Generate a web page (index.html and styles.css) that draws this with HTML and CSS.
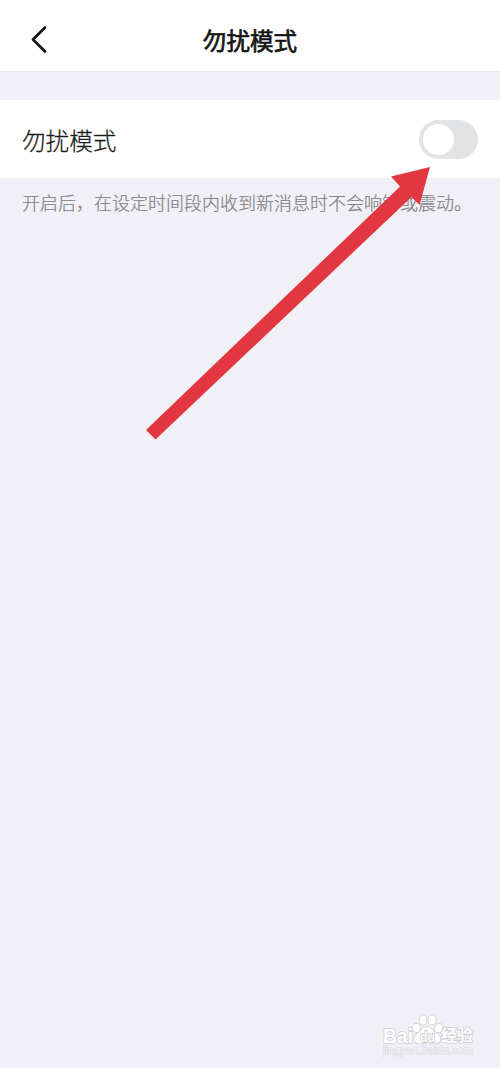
FILE: index.html
```html
<!DOCTYPE html>
<html lang="zh-CN">
<head>
<meta charset="utf-8">
<title>勿扰模式</title>
<link rel="stylesheet" href="styles.css">
</head>
<body>
<div class="screen">
  <header class="navbar">
    <svg class="back" viewBox="0 0 20 30" aria-label="返回"><path d="M15 3.5 L3 15.5 L15 27.5"/></svg>
    <h1 class="title">勿扰模式</h1>
  </header>
  <main class="content">
    <div class="row">
      <span class="label">勿扰模式</span>
      <span class="switch" role="switch" aria-checked="false"><span class="knob"></span></span>
    </div>
    <p class="hint">开启后，在设定时间段内收到新消息时不会响铃或震动。</p>
  </main>
  <svg class="arrow" viewBox="0 0 500 1068"><path d="M430 167 L391 176.500 L400 186.500 L146 430 L155.500 439.500 L411.500 197 L419.500 205 Z"/></svg>
  <div class="watermark">
    <svg class="mark" viewBox="0 0 100 46">
      <g class="paw">
        <ellipse cx="40.500" cy="17" rx="3.600" ry="4.300" transform="rotate(-15 40.500 17)"/>
        <ellipse cx="47" cy="9" rx="3.700" ry="4.800"/>
        <ellipse cx="56" cy="9" rx="3.700" ry="4.800"/>
        <ellipse cx="62.500" cy="17" rx="3.600" ry="4.300" transform="rotate(15 62.500 17)"/>
        <path d="M51 16 C46.500 16 45.500 19.500 41.500 22.500 C36 26.500 37.500 32.500 43 32.500 H59 C65 32.500 66.500 26.500 60.500 22.500 C56.500 19.500 55.500 16 51 16 Z"/>
      </g>
      <text class="brand" x="7" y="32" textLength="30" lengthAdjust="spacingAndGlyphs">Bai</text>
      <text class="du" x="44" y="30.500" textLength="15" lengthAdjust="spacingAndGlyphs">du</text>
      <text class="cjk" x="65" y="30" textLength="32">经验</text>
      <text class="url" x="7" y="43" textLength="90" lengthAdjust="spacingAndGlyphs">jingyan.baidu.com</text>
    </svg>
  </div>
</div>
</body>
</html>
```
FILE: styles.css
```css
* {
  box-sizing: border-box;
}

body {
  margin: 0;
  background: #f0f0f6;
  font-family: "Noto Sans CJK SC", sans-serif;
}

.screen {
  position: relative;
  width: 500px;
  height: 1068px;
  overflow: hidden;
  background: #f0f0f6;
}

.navbar {
  display: grid;
  grid-template-columns: 60px 1fr 60px;
  align-items: center;
  height: 72px;
  padding-top: 7px;
  background: #fff;
  border-bottom: 1px solid #e5e5ea;
}

.back {
  width: 20px;
  height: 30px;
  margin-left: 30px;
}

.back path {
  fill: none;
  stroke: #141414;
  stroke-width: 2.7;
  stroke-linecap: round;
  stroke-linejoin: round;
}

.title {
  margin: 0;
  padding-top: 2px;
  text-align: center;
  font-size: 23.6px;
  font-weight: 400;
  line-height: 34px;
  color: #161616;
  -webkit-text-stroke: 0.7px #161616;
}

.content {
  padding-top: 28px;
}

.row {
  display: flex;
  align-items: center;
  justify-content: space-between;
  height: 78px;
  padding: 0 22px;
  background: #fff;
}

.label {
  padding-top: 2px;
  font-size: 23.6px;
  font-weight: 300;
  line-height: 34px;
  color: #1c1c1c;
  -webkit-text-stroke: 0.3px #1c1c1c;
}

.switch {
  display: flex;
  align-items: center;
  width: 59px;
  height: 39px;
  padding-left: 4px;
  border-radius: 20px;
  background: #e2e3e5;
}

.knob {
  width: 31px;
  height: 31px;
  border-radius: 50%;
  background: #fff;
}

.hint {
  margin: 0;
  padding: 10px 22px;
  font-size: 18px;
  line-height: 28px;
  font-weight: 300;
  white-space: nowrap;
  color: #818187;
  -webkit-text-stroke: 0.2px #818187;
}

.arrow {
  position: absolute;
  inset: 0;
  width: 500px;
  height: 1068px;
  fill: #e23740;
}

.watermark {
  position: absolute;
  right: 24px;
  bottom: 11px;
}

.mark {
  display: block;
  width: 100px;
  height: 46px;
  fill: #fff;
  stroke: #cdcdd1;
  stroke-width: 1.5;
  paint-order: stroke;
}

.brand {
  font: bold 21px "Liberation Sans", sans-serif;
}

.cjk {
  font: bold 16px "Noto Sans CJK SC", sans-serif;
}

.du {
  font: bold 14px "Liberation Sans", sans-serif;
  stroke: #bfbfc4;
}

.url {
  font: 10px "Liberation Sans", sans-serif;
  fill: #f5f5f9;
  stroke: #d8d8dd;
  stroke-width: 1;
}
```
